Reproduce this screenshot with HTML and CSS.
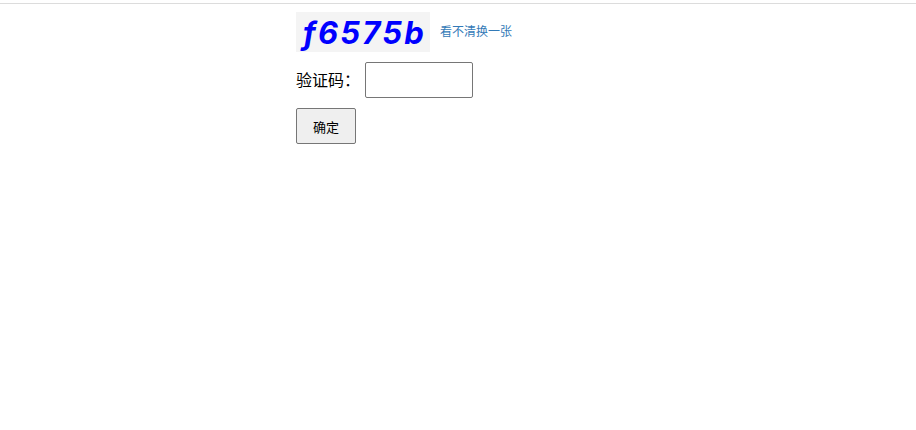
FILE: index.html
```html
<!DOCTYPE html>
<html lang="zh-CN">
<head>
    <meta charset="UTF-8">
    <title>验证码</title>
    <link rel="stylesheet" href="styles.css">
</head>
<body>
    <div class="top-line"></div>
    <form class="captcha-form">
        <div class="captcha-row">
            <span class="captcha-img">f6575b</span>
            <a class="refresh" href="#">看不清换一张</a>
        </div>
        <div class="input-row">
            <label for="code">验证码：</label>
            <input type="text" id="code" name="code">
        </div>
        <button type="button">确定</button>
    </form>
</body>
</html>
```

FILE: styles.css
```css
body {
    margin: 0;
    background-color: #ffffff;
    color: #000000;
    font-family: "Liberation Sans", "Noto Sans CJK SC", sans-serif;
}
.top-line {
    height: 3px;
    border-bottom: 1px solid #dcdcdc;
}
.captcha-form {
    display: flex;
    flex-direction: column;
    align-items: flex-start;
    padding: 8px 0 0 296px;
}
.captcha-row {
    display: flex;
    align-items: center;
    gap: 10px;
}
.captcha-img {
    box-sizing: border-box;
    width: 134px;
    height: 40px;
    padding-left: 7px;
    background-color: #f4f4f4;
    color: #0000ff;
    font-family: "Inter", sans-serif;
    font-size: 31px;
    font-weight: 700;
    font-style: italic;
    letter-spacing: 2.2px;
    line-height: 42px;
    white-space: nowrap;
}
.refresh {
    color: #337ab7;
    font-size: 12px;
    text-decoration: none;
    margin-top: -4px;
}
.input-row {
    display: flex;
    align-items: center;
    margin-top: 10px;
    font-size: 16px;
}
.input-row label {
    width: 69px;
    margin-top: -2px;
}
.input-row input {
    box-sizing: border-box;
    width: 108px;
    height: 36px;
    margin: 0;
    border: 1px solid #767676;
    border-radius: 2px;
    background-color: #ffffff;
}
button {
    box-sizing: border-box;
    width: 60px;
    height: 36px;
    margin-top: 10px;
    border: 1px solid #767676;
    border-radius: 2px;
    background-color: #efefef;
    color: #000000;
    font-family: inherit;
    font-size: 13px;
}
```
